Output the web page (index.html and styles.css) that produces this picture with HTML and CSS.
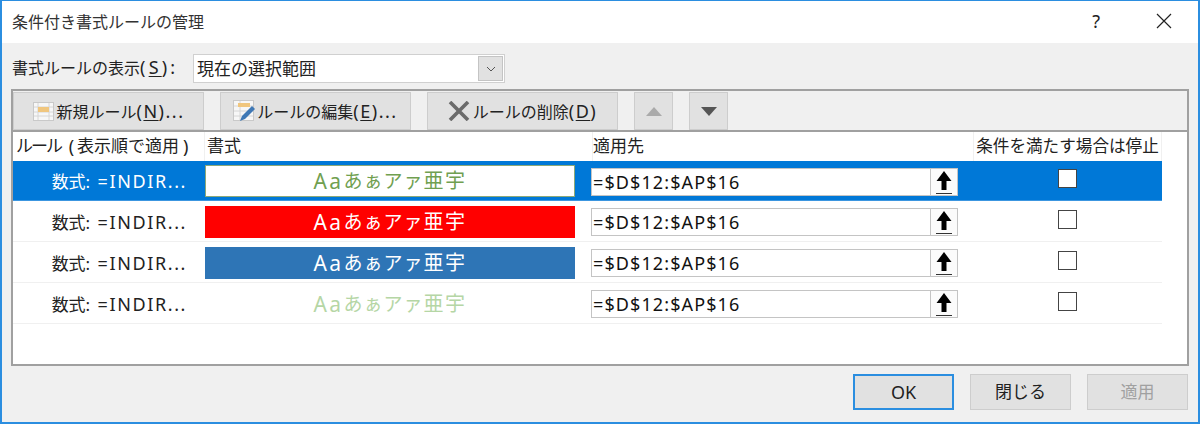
FILE: index.html
```html
<!DOCTYPE html>
<html lang="ja">
<head>
<meta charset="utf-8">
<title>条件付き書式ルールの管理</title>
<link rel="stylesheet" href="styles.css">
</head>
<body>
<div class="dialog">
  <header class="titlebar">
    <span class="title">条件付き書式ルールの管理</span>
    <span class="help">?</span>
    <svg class="close" width="16" height="16" viewBox="0 0 16 16"><path d="M1 1L15 15M15 1L1 15" stroke="#222" stroke-width="1.2" fill="none"/></svg>
  </header>
  <main class="content">
    <div class="showrow">
      <span class="showlabel">書式ルールの表示<span class="lat">(<u>S</u>):</span></span>
      <div class="select">
        <span class="selecttext">現在の選択範囲</span>
        <span class="selectbtn"><svg width="10" height="6" viewBox="0 0 10 6"><path d="M1 1L5 5L9 1" stroke="#555" stroke-width="1" fill="none"/></svg></span>
      </div>
    </div>
    <section class="panel">
      <div class="toolbar">
        <button class="btn b-new">
          <svg width="21" height="19" viewBox="0 0 21 19"><rect x=".5" y=".5" width="20" height="18" fill="#f7f7f7" stroke="#c9c9c9"/><path d="M1 5H20M1 10H20M1 14H20M5 1V18M16 1V18" stroke="#d6d6d6" fill="none"/><rect x="5" y="5" width="11" height="5" fill="#f0c67e"/></svg>
          <span>新規ルール<span class="lat">(<u>N</u>)...</span></span>
        </button>
        <button class="btn b-edit">
          <svg width="24" height="22" viewBox="0 0 24 22"><rect x=".5" y=".5" width="20" height="20" fill="#f7f7f7" stroke="#c9c9c9"/><path d="M1 6H20M1 11H20M1 16H20M7 1V20" stroke="#d6d6d6" fill="none"/><rect x="5" y="3" width="12" height="4" fill="#f0c67e"/><path d="M7 21L9 16L19 6L22 9L12 19Z" fill="#3f78b5"/></svg>
          <span>ルールの編集<span class="lat">(<u>E</u>)...</span></span>
        </button>
        <button class="btn b-del">
          <svg width="22" height="20" viewBox="0 0 22 20"><path d="M2 1L20 19M20 1L2 19" stroke="#6b6b6b" stroke-width="3.600" fill="none"/></svg>
          <span>ルールの削除<span class="lat">(<u>D</u>)</span></span>
        </button>
        <button class="btn b-arrow"><svg width="16" height="9" viewBox="0 0 16 9"><path d="M8 0L16 9H0Z" fill="#aaa"/></svg></button>
        <button class="btn b-arrow"><svg width="16" height="9" viewBox="0 0 16 9"><path d="M0 0H16L8 9Z" fill="#555"/></svg></button>
      </div>
      <div class="list">
        <div class="row head">
          <div class="c-rule h1"><span class="kana">ルール</span><span class="lat"> (</span>表示順で適用<span class="lat">)</span></div>
          <div class="c-fmt h2">書式</div>
          <div class="c-range h3">適用先</div>
          <div class="c-stop h4">条件を満たす場合は停止</div>
        </div>
        <div class="row rule selected">
          <div class="c-rule">数式: <span class="lat">=INDIR...</span></div>
          <div class="c-fmt"><div class="sample s-white"><span class="aa">Aa</span>あぁアァ<span class="kanji">亜宇</span></div></div>
          <div class="c-range"><div class="range"><span class="rangetext">=$D$12:$AP$16</span><span class="rangebtn"><svg width="18" height="24" viewBox="0 0 18 24"><path d="M9 1L16.500 11H11.500V20H6.500V11H1.500Z" fill="#000"/><path d="M1 23.500H17" stroke="#333" fill="none"/></svg></span></div></div>
          <div class="c-stop"><span class="check"></span></div>
        </div>
        <div class="row rule">
          <div class="c-rule">数式: <span class="lat">=INDIR...</span></div>
          <div class="c-fmt"><div class="sample s-red"><span class="aa">Aa</span>あぁアァ<span class="kanji">亜宇</span></div></div>
          <div class="c-range"><div class="range"><span class="rangetext">=$D$12:$AP$16</span><span class="rangebtn"><svg width="18" height="24" viewBox="0 0 18 24"><path d="M9 1L16.500 11H11.500V20H6.500V11H1.500Z" fill="#000"/><path d="M1 23.500H17" stroke="#333" fill="none"/></svg></span></div></div>
          <div class="c-stop"><span class="check"></span></div>
        </div>
        <div class="row rule">
          <div class="c-rule">数式: <span class="lat">=INDIR...</span></div>
          <div class="c-fmt"><div class="sample s-blue"><span class="aa">Aa</span>あぁアァ<span class="kanji">亜宇</span></div></div>
          <div class="c-range"><div class="range"><span class="rangetext">=$D$12:$AP$16</span><span class="rangebtn"><svg width="18" height="24" viewBox="0 0 18 24"><path d="M9 1L16.500 11H11.500V20H6.500V11H1.500Z" fill="#000"/><path d="M1 23.500H17" stroke="#333" fill="none"/></svg></span></div></div>
          <div class="c-stop"><span class="check"></span></div>
        </div>
        <div class="row rule">
          <div class="c-rule">数式: <span class="lat">=INDIR...</span></div>
          <div class="c-fmt"><div class="sample s-pale"><span class="aa">Aa</span>あぁアァ<span class="kanji">亜宇</span></div></div>
          <div class="c-range"><div class="range"><span class="rangetext">=$D$12:$AP$16</span><span class="rangebtn"><svg width="18" height="24" viewBox="0 0 18 24"><path d="M9 1L16.500 11H11.500V20H6.500V11H1.500Z" fill="#000"/><path d="M1 23.500H17" stroke="#333" fill="none"/></svg></span></div></div>
          <div class="c-stop"><span class="check"></span></div>
        </div>
      </div>
    </section>
    <footer class="footer">
      <button class="fbtn ok">OK</button>
      <button class="fbtn">閉じる</button>
      <button class="fbtn off">適用</button>
    </footer>
  </main>
</div>
</body>
</html>
```

FILE: styles.css
```css
* { box-sizing: border-box; }
html, body { margin: 0; padding: 0; }
body {
  width: 1200px;
  height: 424px;
  overflow: hidden;
  font-family: "Noto Sans", "Noto Sans CJK JP", sans-serif;
  font-size: 16px;
  color: #222;
}
button { font: inherit; color: inherit; padding: 0; cursor: default; }
u { text-underline-offset: 2px; }
.lat { font-size: 18px; letter-spacing: 1.5px; white-space: pre; }
.kana { letter-spacing: -2px; font-size: 17px; }

.dialog {
  width: 1200px;
  height: 424px;
  border: 2px solid #2b8ee0;
  border-top-width: 1px;
  display: flex;
  flex-direction: column;
  background: #f0f0f0;
}
.titlebar {
  height: 42px;
  flex: none;
  background: #fff;
  display: flex;
  align-items: center;
  padding-left: 10px;
}
.title { flex: 1; line-height: 1; margin-top: -1px; color: #333; }
.help { font-size: 18px; margin-right: 56px; margin-top: -2px; color: #222; }
.close { margin-right: 26px; margin-top: -2px; }

.content {
  flex: 1;
  display: flex;
  flex-direction: column;
  padding: 11px 9px 0 9px;
}
.showrow { display: flex; align-items: center; height: 29px; flex: none; }
.showlabel { width: 182px; padding-left: 1px; margin-top: -3px; line-height: 22px; white-space: nowrap; }
.showlabel .lat { letter-spacing: 3.2px; }
.select {
  width: 312px;
  height: 29px;
  background: #fff;
  border: 1px solid #d0d0d0;
  display: flex;
  align-items: center;
  justify-content: space-between;
}
.selecttext { padding-left: 3px; line-height: 22px; font-size: 17px; }
.selectbtn {
  width: 25px;
  height: 25px;
  margin-right: 1px;
  background: #e1e1e1;
  border: 1px solid #c4c4c4;
  display: flex;
  align-items: center;
  justify-content: center;
}

.panel {
  margin-top: 6px;
  height: 277px;
  flex: none;
  border: 2px solid #a0a0a0;
  display: flex;
  flex-direction: column;
  width: 1178px;
}
.toolbar {
  height: 41px;
  flex: none;
  display: flex;
  align-items: flex-start;
  border-bottom: 2px solid #a0a0a0;
  padding-top: 1px;
}
.btn {
  height: 38px;
  background: #e1e1e1;
  border: 1px solid #cdcdcd;
  display: flex;
  align-items: center;
  justify-content: center;
  line-height: 22px;
  flex: none;
  white-space: nowrap;
}
.b-new { width: 191px; gap: 3px; margin-right: 16px; }
.b-edit { width: 191px; gap: 0; margin-right: 16px; }
.b-del { width: 191px; gap: 3px; margin-right: 16px; }
.b-arrow { width: 39px; margin-right: 16px; }

.list { flex: 1; background: #fff; font-size: 17px; }
.row { display: flex; width: 1149px; }
.head { height: 29px; }
.head > div { display: flex; align-items: center; line-height: 22px; padding-bottom: 2px; border-right: 1px solid #f0f0f0; white-space: pre; }
.h1 { padding-left: 3px; }
.h1 .lat { letter-spacing: 3px; }
.h1 .lat:last-child { margin-left: 4px; }
.h2 { padding-left: 2px; }
.h3 { padding-left: 0; }
.h4 { justify-content: center; padding: 0 0 2px 0; font-size: 16.6px; }
.c-rule { width: 192px; flex: none; }
.c-fmt { width: 388px; flex: none; }
.c-range { width: 381px; flex: none; }
.c-stop { width: 188px; flex: none; }

.rule {
  height: 41px;
  align-items: center;
  border-bottom: 1px solid #f0f0f0;
}
.rule .c-rule { text-align: right; padding-right: 18px; line-height: 22px; margin-top: 2px; white-space: nowrap; }
.rule .lat { letter-spacing: 1.6px; margin-left: 3px; }
.rule .c-stop { display: flex; justify-content: center; padding-right: 1px; }
.selected { background: #0078d7; height: 40px; border-bottom: 1px solid #3c96e0; }
.selected .c-rule { color: #fff; }

.sample {
  width: 370px;
  height: 32px;
  display: flex;
  align-items: center;
  justify-content: center;
  font-size: 19px;
  letter-spacing: 1px;
  line-height: 24px;
  margin-top: 1px;
  white-space: nowrap;
}
.aa { font-size: 21px; letter-spacing: 2.500px; }
.kanji { letter-spacing: 1.500px; font-size: 20px; }
.s-white { background: #fff; color: #70a050; border: 1px solid #8ca878; }
.s-red { background: #ff0000; color: #fff; }
.s-blue { background: #2e75b6; color: #fff; }
.s-pale { color: #b5d6a5; }

.range {
  width: 367px;
  height: 28px;
  margin-left: -2px;
  margin-top: 2px;
  background: #fff;
  border: 1px solid #c4c4c4;
  display: flex;
  align-items: center;
  justify-content: space-between;
  font-size: 18px;
  color: #111;
  letter-spacing: 1.1px;
}
.rangetext { padding-left: 1px; line-height: 22px; }
.rangebtn {
  width: 27px;
  height: 26px;
  background: #fbfbfb;
  border-left: 1px solid #c4c4c4;
  display: flex;
  align-items: center;
  justify-content: center;
}
.check {
  width: 19px;
  height: 19px;
  background: #fff;
  border: 1px solid #444;
  margin-top: -4px;
  display: block;
}

.footer {
  flex: none;
  height: 36px;
  margin-top: 8px;
  display: flex;
  justify-content: flex-end;
  gap: 16px;
  width: 1177px;
}
.fbtn {
  width: 101px;
  height: 36px;
  background: #e1e1e1;
  border: 1px solid #cdcdcd;
  line-height: 22px;
  font-size: 17px;
}
.ok { border: 2px solid #2b8ee0; font-size: 18px; }
.off { color: #a0a0a0; }
```
